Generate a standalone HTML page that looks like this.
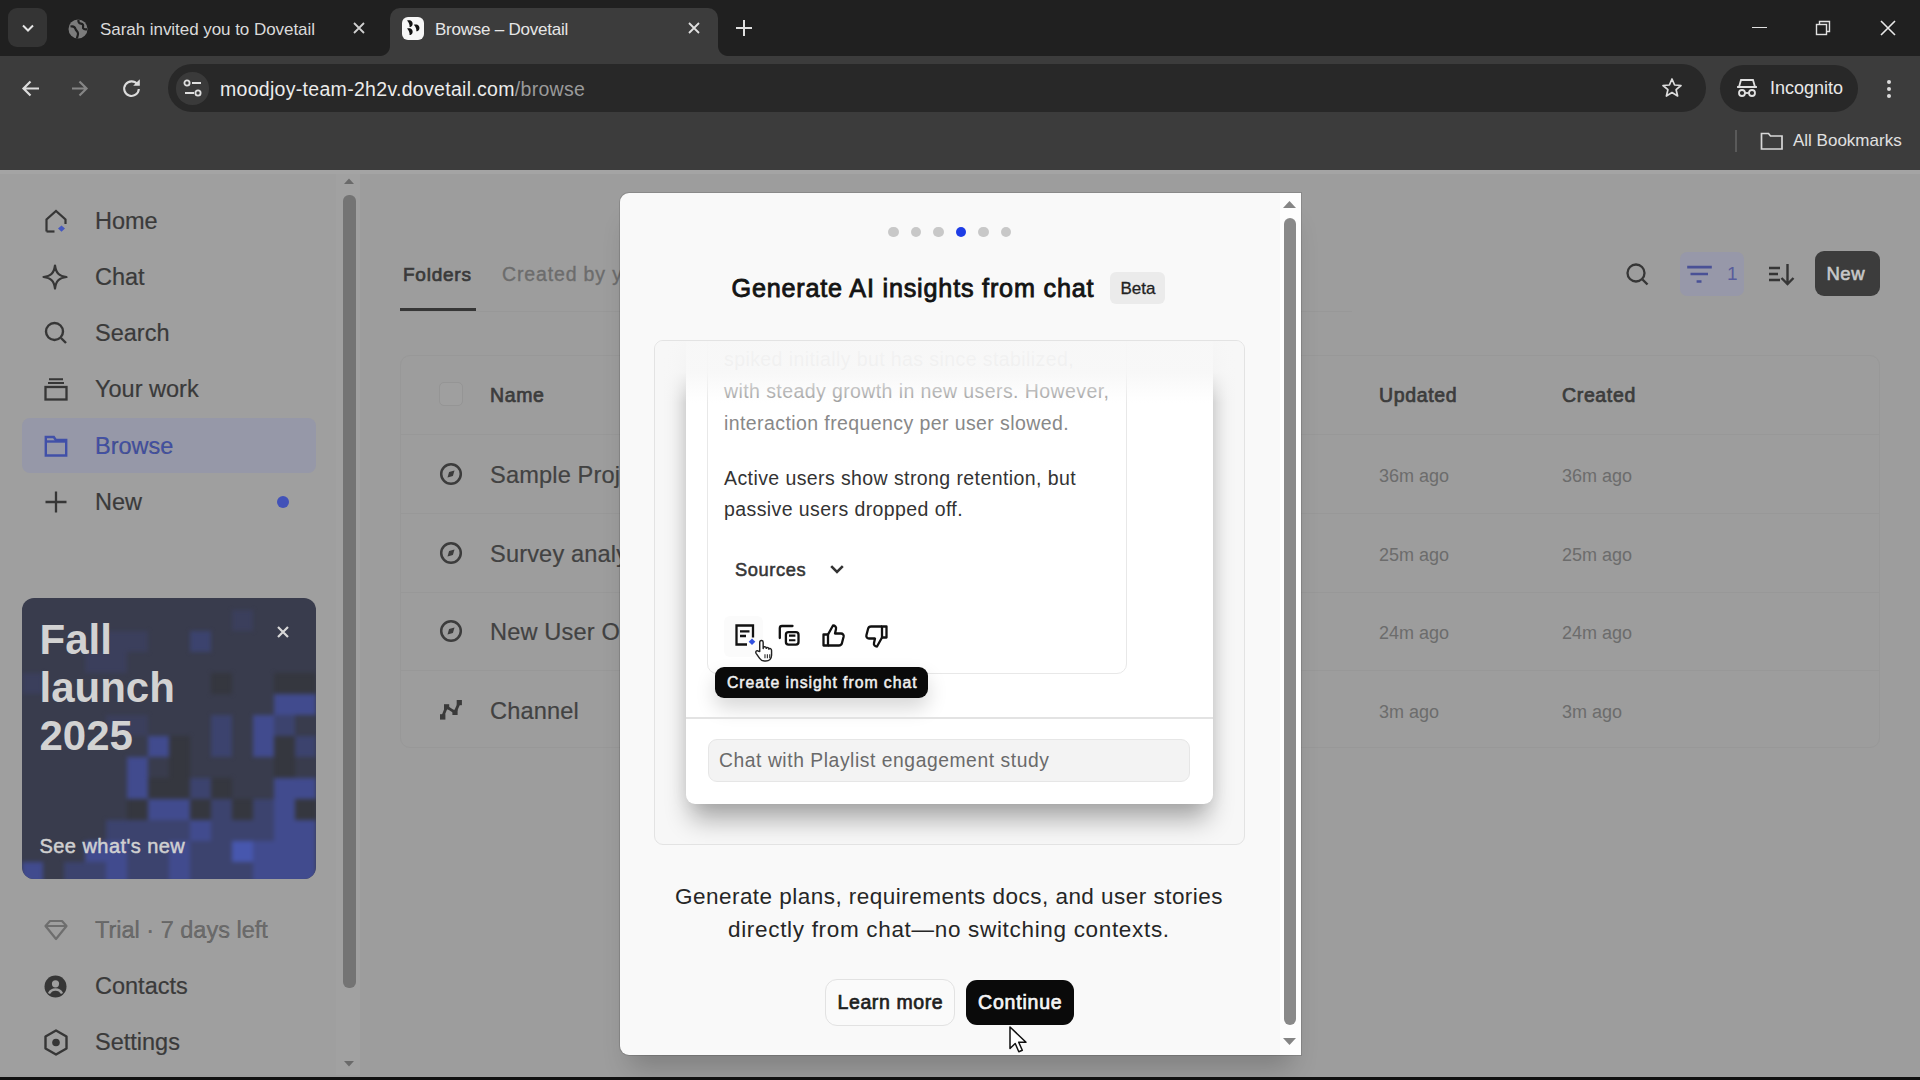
<!DOCTYPE html>
<html><head><meta charset="utf-8">
<style>
*{box-sizing:border-box;margin:0;padding:0}
html,body{width:1920px;height:1080px;overflow:hidden;background:#fff;font-family:"Liberation Sans",sans-serif}
.a{position:absolute}
.t{position:absolute;white-space:nowrap;line-height:1}
svg{position:absolute;overflow:visible}
/* chrome */
#tabbar{left:0;top:0;width:1920px;height:56px;background:#202020}
#toolbar{left:0;top:56px;width:1920px;height:114px;background:#3c3c3c}
/* page */
#page{left:0;top:170px;width:1920px;height:907px;background:#9d9d9d;overflow:hidden}
#overlay{display:none}
#bottom{left:0;top:1077px;width:1920px;height:3px;background:#111}
.nav{font-size:23.5px;color:#3a3a3a;-webkit-text-stroke:0.2px #3a3a3a}
.hd{font-size:19.5px;letter-spacing:0.65px;-webkit-text-stroke:0.7px #3c3c3c;color:#3c3c3c}
.row{font-size:23.6px;letter-spacing:0.15px;color:#424242;-webkit-text-stroke:0.2px #424242}
.tm{font-size:18px;color:#6c6c6c}
.dot{width:10.5px;height:10.5px;border-radius:6px;background:#c8c8c8;margin:0.25px}
.ct{font-size:19.5px;letter-spacing:0.41px;color:#333}
.desc{font-size:22.5px;color:#262626}
</style></head><body>
<div id="tabbar" class="a">
  <div class="a" style="left:8px;top:8px;width:39px;height:39px;border-radius:9px;background:#343434"></div>
  <svg style="left:20px;top:20px" width="16" height="16" viewBox="0 0 16 16"><path d="M3 5.5l5 5 5-5" fill="none" stroke="#e6e6e6" stroke-width="2"/></svg>
  <!-- tab 1 -->
  <svg style="left:68px;top:18.5px" width="20" height="20" viewBox="0 0 20 20"><circle cx="10" cy="10" r="9.5" fill="#7c7c7c"/><path d="M2.5 7.5c2.5-.5 4.5.5 5 2.5s2.5 2 2.5 4.5-1 3-1 5M10.5 0.8c-.5 2 .5 3.5 2.5 3.8s2.5 1.5 2 3.5 2 2.5 4 2" fill="none" stroke="#202020" stroke-width="2.2"/></svg>
  <div class="t" style="left:100px;top:20.9px;font-size:17px;letter-spacing:-0.05px;color:#dadada">Sarah invited you to Dovetail</div>
  <svg style="left:352px;top:21px" width="14" height="14" viewBox="0 0 14 14"><path d="M2 2l10 10M12 2L2 12" stroke="#d0d0d0" stroke-width="1.8"/></svg>
  <!-- active tab -->
  <div class="a" style="left:390px;top:8px;width:328px;height:50px;border-radius:10px 10px 0 0;background:#3c3c3c"></div>
  <div class="a" style="left:380px;top:46px;width:10px;height:10px;background:radial-gradient(circle at 0 0,rgba(60,60,60,0) 9.5px,#3c3c3c 10.5px)"></div>
  <div class="a" style="left:718px;top:46px;width:10px;height:10px;background:radial-gradient(circle at 100% 0,rgba(60,60,60,0) 9.5px,#3c3c3c 10.5px)"></div>
  <div class="a" style="left:402px;top:17px;width:22px;height:22.5px;border-radius:6px;background:#f6f6f6"></div>
  <svg style="left:402px;top:17px" width="22" height="22" viewBox="0 0 22 22"><path transform="translate(5 3.6) scale(0.85)" d="M0 0C4 -1.5 7.5 1 6.5 4.8C6 6.8 4.5 7.5 3 7.5C3.3 5 2.3 2.5 0 0z" fill="#111"/><path transform="translate(5 11.6) scale(0.85)" d="M0 0C4 -1.5 7.5 1 6.5 4.8C6 6.8 4.5 7.5 3 7.5C3.3 5 2.3 2.5 0 0z" fill="#111"/><path transform="translate(11.8 7.8) scale(0.85)" d="M0 0C4 -1.5 7.5 1 6.5 4.8C6 6.8 4.5 7.5 3 7.5C3.3 5 2.3 2.5 0 0z" fill="#111"/></svg>
  <div class="t" style="left:435px;top:20.9px;font-size:17px;letter-spacing:-0.23px;color:#e6e6e6">Browse – Dovetail</div>
  <svg style="left:687px;top:21px" width="14" height="14" viewBox="0 0 14 14"><path d="M2 2l10 10M12 2L2 12" stroke="#e0e0e0" stroke-width="1.8"/></svg>
  <svg style="left:735px;top:19px" width="18" height="18" viewBox="0 0 18 18"><path d="M9 1v16M1 9h16" stroke="#e0e0e0" stroke-width="2"/></svg>
  <!-- window controls -->
  <div class="a" style="left:1752px;top:27px;width:14.5px;height:1.4px;background:#e0e0e0"></div>
  <svg style="left:1815px;top:20px" width="16" height="16" viewBox="0 0 16 16"><rect x="1.5" y="4.5" width="10" height="10" fill="none" stroke="#e0e0e0" stroke-width="1.4"/><path d="M4.5 4.5V1.5h10v10h-3" fill="none" stroke="#e0e0e0" stroke-width="1.4"/></svg>
  <svg style="left:1880px;top:20px" width="16" height="16" viewBox="0 0 16 16"><path d="M1 1l14 14M15 1L1 15" stroke="#e8e8e8" stroke-width="1.6"/></svg>
</div>
<div id="toolbar" class="a">
  <svg style="left:20px;top:22px" width="20" height="20" viewBox="0 0 20 20"><path d="M19 10.5H4M10.5 3.5L3.5 10.5l7 7" fill="none" stroke="#dcdcdc" stroke-width="2.2"/></svg>
  <svg style="left:70px;top:22px" width="20" height="20" viewBox="0 0 20 20"><path d="M2 10.5h15M9.5 3.5l7 7-7 7" fill="none" stroke="#858585" stroke-width="2.2"/></svg>
  <svg style="left:121px;top:22px" width="20" height="20" viewBox="0 0 20 20"><path d="M16.3 6.2A7.3 7.3 0 1 0 17.8 11" fill="none" stroke="#dcdcdc" stroke-width="2.1"/><path d="M12.2 7.8L18.8 1.2V7.8z" fill="#dcdcdc"/></svg>
  <div class="a" style="left:168px;top:8px;width:1538px;height:48px;border-radius:24px;background:#282828"></div>
  <div class="a" style="left:175.5px;top:15.5px;width:33px;height:33px;border-radius:16px;background:#3a3a3a"></div>
  <svg style="left:183px;top:23px" width="20" height="18" viewBox="0 0 20 18"><circle cx="4" cy="4" r="2.6" fill="none" stroke="#e0e0e0" stroke-width="1.8"/><path d="M9 4h9M2 14h9" stroke="#e0e0e0" stroke-width="1.8"/><circle cx="15" cy="14" r="2.6" fill="none" stroke="#e0e0e0" stroke-width="1.8"/></svg>
  <div class="t" style="left:220px;top:24.2px;font-size:19.5px;letter-spacing:0.3px;color:#ececec">moodjoy-team-2h2v.dovetail.com<span style="color:#9a9a9a">/browse</span></div>
  <svg style="left:1661px;top:21px" width="22" height="22" viewBox="0 0 22 22"><path d="M11 2l2.6 6 6.4.5-4.9 4.2 1.5 6.3L11 15.6 5.4 19l1.5-6.3L2 8.5 8.4 8z" fill="none" stroke="#dcdcdc" stroke-width="1.7" stroke-linejoin="round"/></svg>
  <div class="a" style="left:1720px;top:9px;width:138px;height:47px;border-radius:24px;background:#282828"></div>
  <svg style="left:1736px;top:22px" width="22" height="20" viewBox="0 0 22 20"><path d="M5 2h12l2 7H3z" fill="none" stroke="#e0e0e0" stroke-width="1.8"/><path d="M1 9h20" stroke="#e0e0e0" stroke-width="1.8"/><circle cx="6" cy="15" r="3" fill="none" stroke="#e0e0e0" stroke-width="1.8"/><circle cx="16" cy="15" r="3" fill="none" stroke="#e0e0e0" stroke-width="1.8"/><path d="M9 15h4" stroke="#e0e0e0" stroke-width="1.8"/></svg>
  <div class="t" style="left:1770px;top:23px;font-size:18px;color:#e8e8e8">Incognito</div>
  <div class="a" style="left:1887px;top:24px;width:4px;height:4px;border-radius:2px;background:#dcdcdc"></div>
  <div class="a" style="left:1887px;top:31px;width:4px;height:4px;border-radius:2px;background:#dcdcdc"></div>
  <div class="a" style="left:1887px;top:38px;width:4px;height:4px;border-radius:2px;background:#dcdcdc"></div>
  <!-- bookmarks -->
  <div class="a" style="left:1735px;top:74px;width:1.5px;height:22px;background:#5a5a5a"></div>
  <svg style="left:1760px;top:75px" width="24" height="20" viewBox="0 0 24 20"><path d="M1.5 2.5h7l2 2.5h11.5v13H1.5z" fill="none" stroke="#d8d8d8" stroke-width="1.7"/></svg>
  <div class="t" style="left:1793px;top:76px;font-size:17px;color:#e0e0e0">All Bookmarks</div>
</div>
<div id="page" class="a">
  <!-- sidebar -->
  <div class="a" style="left:0;top:0;width:336px;height:905px;background:#9f9f9f"></div>
  <!-- nav -->
  <svg style="left:44px;top:39px" width="24" height="24" viewBox="0 0 24 24"><path d="M2.5 22.5V10.5L12 2l9.5 8.5V15" fill="none" stroke="#363636" stroke-width="2.2" stroke-linejoin="miter"/><path d="M2.5 22.5h8" stroke="#363636" stroke-width="2.2"/><path d="M17.5 16.5l3.5 3-3.5 3.2-3.5-3.2z" fill="#4558c0"/></svg>
  <div class="t nav" style="left:95px;top:40px">Home</div>
  <svg style="left:42px;top:94px" width="26" height="26" viewBox="0 0 26 26"><path d="M13 1.5C14 9 17 12 24.5 13 17 14 14 17 13 24.5 12 17 9 14 1.5 13 9 12 12 9 13 1.5z" fill="none" stroke="#363636" stroke-width="2.2" stroke-linejoin="round"/></svg>
  <div class="t nav" style="left:95px;top:96px">Chat</div>
  <svg style="left:44px;top:151px" width="24" height="24" viewBox="0 0 24 24"><circle cx="10.5" cy="10.5" r="8.5" fill="none" stroke="#363636" stroke-width="2.4"/><path d="M17 17l5 5" stroke="#363636" stroke-width="2.4"/></svg>
  <div class="t nav" style="left:95px;top:152px">Search</div>
  <svg style="left:44px;top:207px" width="24" height="24" viewBox="0 0 24 24"><rect x="1.5" y="10" width="21" height="12.5" fill="none" stroke="#363636" stroke-width="2.3"/><path d="M4 6h16M5 2.2h14" stroke="#363636" stroke-width="2"/></svg>
  <div class="t nav" style="left:95px;top:208px">Your work</div>
  <div class="a" style="left:22px;top:248px;width:294px;height:55px;border-radius:8px;background:#9698a8"></div>
  <svg style="left:44px;top:264px" width="24" height="24" viewBox="0 0 24 24"><path d="M1.8 3h8l2 3h10.4v15.5H1.8z" fill="none" stroke="#4150a8" stroke-width="2.4"/><path d="M1.8 7.5h20.4" stroke="#4150a8" stroke-width="2.4"/></svg>
  <div class="t nav" style="left:95px;top:265px;color:#4150a8">Browse</div>
  <svg style="left:44px;top:320px" width="24" height="24" viewBox="0 0 24 24"><path d="M12 1.5v21M1.5 12h21" stroke="#363636" stroke-width="2.3"/></svg>
  <div class="t nav" style="left:95px;top:321px">New</div>
  <div class="a" style="left:276.5px;top:326px;width:12px;height:12px;border-radius:6px;background:#4252b8"></div>
  <!-- promo -->
  <div class="a" id="promo" style="left:22px;top:428px;width:294px;height:281px;border-radius:12px;overflow:hidden;background:#393c4d"><div class="a" style="left:0;top:0;width:294px;height:294px;filter:blur(2px)"><div class="a" style="left:210px;top:12px;width:21px;height:21px;background:#3b3f5c"></div><div class="a" style="left:84px;top:33px;width:21px;height:21px;background:#3b3f5c"></div><div class="a" style="left:105px;top:33px;width:21px;height:21px;background:#3b3f5c"></div><div class="a" style="left:168px;top:33px;width:21px;height:21px;background:#3c436e"></div><div class="a" style="left:63px;top:54px;width:21px;height:21px;background:#3b3f5c"></div><div class="a" style="left:84px;top:54px;width:21px;height:21px;background:#3b3f5c"></div><div class="a" style="left:0px;top:75px;width:21px;height:21px;background:#3b3f5c"></div><div class="a" style="left:189px;top:75px;width:21px;height:21px;background:#35373f"></div><div class="a" style="left:252px;top:75px;width:21px;height:21px;background:#35373f"></div><div class="a" style="left:273px;top:75px;width:21px;height:21px;background:#35373f"></div><div class="a" style="left:252px;top:96px;width:21px;height:21px;background:#414b8e"></div><div class="a" style="left:273px;top:96px;width:21px;height:21px;background:#414b8e"></div><div class="a" style="left:84px;top:117px;width:21px;height:21px;background:#3b3f5c"></div><div class="a" style="left:105px;top:117px;width:21px;height:21px;background:#3b3f5c"></div><div class="a" style="left:189px;top:117px;width:21px;height:21px;background:#3c436e"></div><div class="a" style="left:231px;top:117px;width:21px;height:21px;background:#414b8e"></div><div class="a" style="left:252px;top:117px;width:21px;height:21px;background:#3c436e"></div><div class="a" style="left:126px;top:138px;width:21px;height:21px;background:#414b8e"></div><div class="a" style="left:147px;top:138px;width:21px;height:21px;background:#35373f"></div><div class="a" style="left:189px;top:138px;width:21px;height:21px;background:#3c436e"></div><div class="a" style="left:231px;top:138px;width:21px;height:21px;background:#414b8e"></div><div class="a" style="left:252px;top:138px;width:21px;height:21px;background:#35373f"></div><div class="a" style="left:273px;top:138px;width:21px;height:21px;background:#3c436e"></div><div class="a" style="left:105px;top:159px;width:21px;height:21px;background:#414b8e"></div><div class="a" style="left:147px;top:159px;width:21px;height:21px;background:#35373f"></div><div class="a" style="left:252px;top:159px;width:21px;height:21px;background:#35373f"></div><div class="a" style="left:105px;top:180px;width:21px;height:21px;background:#414b8e"></div><div class="a" style="left:126px;top:180px;width:21px;height:21px;background:#35373f"></div><div class="a" style="left:147px;top:180px;width:21px;height:21px;background:#35373f"></div><div class="a" style="left:168px;top:180px;width:21px;height:21px;background:#3c436e"></div><div class="a" style="left:189px;top:180px;width:21px;height:21px;background:#35373f"></div><div class="a" style="left:252px;top:180px;width:21px;height:21px;background:#414b8e"></div><div class="a" style="left:273px;top:180px;width:21px;height:21px;background:#414b8e"></div><div class="a" style="left:105px;top:201px;width:21px;height:21px;background:#35373f"></div><div class="a" style="left:126px;top:201px;width:21px;height:21px;background:#414b8e"></div><div class="a" style="left:147px;top:201px;width:21px;height:21px;background:#414b8e"></div><div class="a" style="left:168px;top:201px;width:21px;height:21px;background:#35373f"></div><div class="a" style="left:189px;top:201px;width:21px;height:21px;background:#3c436e"></div><div class="a" style="left:210px;top:201px;width:21px;height:21px;background:#35373f"></div><div class="a" style="left:231px;top:201px;width:21px;height:21px;background:#3c436e"></div><div class="a" style="left:252px;top:201px;width:21px;height:21px;background:#414b8e"></div><div class="a" style="left:273px;top:201px;width:21px;height:21px;background:#35373f"></div><div class="a" style="left:84px;top:222px;width:21px;height:21px;background:#3c436e"></div><div class="a" style="left:105px;top:222px;width:21px;height:21px;background:#3c436e"></div><div class="a" style="left:126px;top:222px;width:21px;height:21px;background:#3c436e"></div><div class="a" style="left:147px;top:222px;width:21px;height:21px;background:#3c436e"></div><div class="a" style="left:168px;top:222px;width:21px;height:21px;background:#414b8e"></div><div class="a" style="left:189px;top:222px;width:21px;height:21px;background:#3c436e"></div><div class="a" style="left:210px;top:222px;width:21px;height:21px;background:#3c436e"></div><div class="a" style="left:231px;top:222px;width:21px;height:21px;background:#3c436e"></div><div class="a" style="left:252px;top:222px;width:21px;height:21px;background:#414b8e"></div><div class="a" style="left:273px;top:222px;width:21px;height:21px;background:#414b8e"></div><div class="a" style="left:63px;top:243px;width:21px;height:21px;background:#414b8e"></div><div class="a" style="left:84px;top:243px;width:21px;height:21px;background:#414b8e"></div><div class="a" style="left:105px;top:243px;width:21px;height:21px;background:#3c436e"></div><div class="a" style="left:126px;top:243px;width:21px;height:21px;background:#3c436e"></div><div class="a" style="left:147px;top:243px;width:21px;height:21px;background:#414b8e"></div><div class="a" style="left:168px;top:243px;width:21px;height:21px;background:#3c436e"></div><div class="a" style="left:189px;top:243px;width:21px;height:21px;background:#3c436e"></div><div class="a" style="left:210px;top:243px;width:21px;height:21px;background:#4757ae"></div><div class="a" style="left:231px;top:243px;width:21px;height:21px;background:#414b8e"></div><div class="a" style="left:252px;top:243px;width:21px;height:21px;background:#414b8e"></div><div class="a" style="left:273px;top:243px;width:21px;height:21px;background:#414b8e"></div><div class="a" style="left:0px;top:264px;width:21px;height:21px;background:#414b8e"></div><div class="a" style="left:42px;top:264px;width:21px;height:21px;background:#3c436e"></div><div class="a" style="left:63px;top:264px;width:21px;height:21px;background:#3c436e"></div><div class="a" style="left:84px;top:264px;width:21px;height:21px;background:#414b8e"></div><div class="a" style="left:105px;top:264px;width:21px;height:21px;background:#3c436e"></div><div class="a" style="left:126px;top:264px;width:21px;height:21px;background:#3c436e"></div><div class="a" style="left:147px;top:264px;width:21px;height:21px;background:#414b8e"></div><div class="a" style="left:168px;top:264px;width:21px;height:21px;background:#3c436e"></div><div class="a" style="left:189px;top:264px;width:21px;height:21px;background:#3c436e"></div><div class="a" style="left:210px;top:264px;width:21px;height:21px;background:#3c436e"></div><div class="a" style="left:231px;top:264px;width:21px;height:21px;background:#414b8e"></div><div class="a" style="left:252px;top:264px;width:21px;height:21px;background:#414b8e"></div><div class="a" style="left:273px;top:264px;width:21px;height:21px;background:#414b8e"></div></div>
  <div class="t" style="left:17.5px;top:17.5px;font-size:42px;font-weight:700;color:#d2d2d2;line-height:48.2px">Fall<br>launch<br>2025</div>
  <svg style="left:255px;top:28px" width="12" height="12" viewBox="0 0 12 12"><path d="M1 1l10 10M11 1L1 11" stroke="#d8d8d8" stroke-width="2.2"/></svg>
  <div class="t" style="left:17.5px;top:237.5px;font-size:20px;font-weight:400;-webkit-text-stroke:0.5px #d0d0d0;letter-spacing:0.45px;color:#d0d0d0">See what's new</div>
</div>
  <svg style="left:44px;top:749px" width="24" height="22" viewBox="0 0 24 22"><path d="M6 2h12l4.5 5L12 20 1.5 7z M1.5 7h21" fill="none" stroke="#6e6e6e" stroke-width="2.2" stroke-linejoin="round"/></svg>
  <div class="t nav" style="left:95px;top:749px;color:#6c6c6c">Trial · 7 days left</div>
  <svg style="left:44px;top:805px" width="23" height="23" viewBox="0 0 23 23"><circle cx="11.5" cy="11.5" r="11" fill="#363636"/><circle cx="11.5" cy="8.8" r="3.6" fill="#9f9f9f"/><path d="M5 18.5c1.5-3 4-4 6.5-4s5 1 6.5 4" fill="none" stroke="#9f9f9f" stroke-width="2.4"/></svg>
  <div class="t nav" style="left:95px;top:805px">Contacts</div>
  <svg style="left:43px;top:859px" width="26" height="27" viewBox="0 0 26 27"><path d="M13 1.5l10.5 6v12L13 25.5 2.5 19.5v-12z" fill="none" stroke="#363636" stroke-width="2.4" stroke-linejoin="round"/><circle cx="13" cy="13.5" r="3.8" fill="#363636"/></svg>
  <div class="t nav" style="left:95px;top:861px">Settings</div>
  <!-- sidebar scrollbar -->
  <div class="a" style="left:336px;top:0;width:24px;height:905px;background:#a1a1a1"></div>
  <div class="a" style="left:343px;top:25px;width:12.5px;height:793px;border-radius:6px;background:#747474"></div>
  <svg style="left:343px;top:7px" width="12" height="8" viewBox="0 0 12 8"><path d="M1 7L6 1.5 11 7z" fill="#6a6a6a"/></svg>
  <svg style="left:343px;top:890px" width="12" height="8" viewBox="0 0 12 8"><path d="M1 1L6 6.5 11 1z" fill="#6a6a6a"/></svg>
  <!-- main -->
  <div class="t" style="left:403px;top:94.7px;font-size:19px;letter-spacing:0.76px;-webkit-text-stroke:0.7px #3a3a3a;color:#3a3a3a">Folders</div>
  <div class="t" style="left:502px;top:94.7px;font-size:19.5px;letter-spacing:0.85px;color:#6c6c6c;-webkit-text-stroke:0.35px #6c6c6c">Created by you</div>
  <div class="a" style="left:400px;top:137.5px;width:76px;height:3.5px;background:#363636"></div>
  <div class="a" style="left:400px;top:140.5px;width:952px;height:1.5px;background:#989898"></div>
  <!-- toolbar right -->
  <svg style="left:1626px;top:93px" width="24" height="23" viewBox="0 0 24 23"><circle cx="10" cy="10" r="8.5" fill="none" stroke="#363636" stroke-width="2.3"/><path d="M16.5 16.5l5 5" stroke="#363636" stroke-width="2.4"/></svg>
  <div class="a" style="left:1680px;top:82.3px;width:64.3px;height:43.4px;border-radius:7px;background:#9798a9"></div>
  <svg style="left:1680px;top:90px" width="40" height="30" viewBox="1680 90 40 30"><path d="M1687.2 97.2h24.6M1690.5 104h17.5M1696.6 111.5h4.9" stroke="#4a5196" stroke-width="2.7"/></svg>
  <div class="t" style="left:1727px;top:94.4px;font-size:19px;color:#585c9c">1</div>
  <svg style="left:1768px;top:93px" width="28" height="23" viewBox="0 0 28 23"><path d="M1 5h11M1 11h9M1 17h11" stroke="#363636" stroke-width="2.6"/><path d="M19.5 1v20M13.5 15l6 6 6-6" fill="none" stroke="#363636" stroke-width="2.4"/></svg>
  <div class="a" style="left:1815px;top:81px;width:65px;height:45px;border-radius:9px;background:#3c3c3c"></div>
  <div class="t" style="left:1826.5px;top:95.3px;font-size:18.5px;font-weight:400;letter-spacing:0.5px;-webkit-text-stroke:0.6px #c8c8c8;color:#c8c8c8">New</div>
  <!-- table -->
  <div class="a" style="left:400px;top:185px;width:1480px;height:393px;border:1.5px solid #989898;border-radius:10px;background:#9d9d9d"></div>
  <div class="a" style="left:401px;top:264px;width:1478px;height:1px;background:#989898"></div>
  <div class="a" style="left:401px;top:343px;width:1478px;height:1px;background:#989898"></div>
  <div class="a" style="left:401px;top:421.5px;width:1478px;height:1px;background:#989898"></div>
  <div class="a" style="left:401px;top:500px;width:1478px;height:1px;background:#989898"></div>
  <div class="a" style="left:439px;top:212px;width:24px;height:24px;border:1.5px solid #959595;border-radius:5px;background:#9f9f9f"></div>
  <div class="t hd" style="left:490px;top:215.8px">Name</div>
  <div class="t hd" style="left:1379px;top:215.8px">Updated</div>
  <div class="t hd" style="left:1562px;top:215.8px">Created</div>
  <svg style="left:440px;top:293px" width="22" height="22" viewBox="0 0 22 22"><circle cx="11" cy="11" r="9.8" fill="none" stroke="#3c3c3c" stroke-width="2.5"/><path d="M14.5 7.5l-1.6 5.4-5.4 1.6 1.6-5.4z" fill="#3c3c3c"/></svg>
  <div class="t row" style="left:490px;top:293.5px">Sample Project</div>
  <div class="t tm" style="left:1379px;top:296.5px">36m ago</div><div class="t tm" style="left:1562px;top:296.5px">36m ago</div>
  <svg style="left:440px;top:372px" width="22" height="22" viewBox="0 0 22 22"><circle cx="11" cy="11" r="9.8" fill="none" stroke="#3c3c3c" stroke-width="2.5"/><path d="M14.5 7.5l-1.6 5.4-5.4 1.6 1.6-5.4z" fill="#3c3c3c"/></svg>
  <div class="t row" style="left:490px;top:372.5px">Survey analysis</div>
  <div class="t tm" style="left:1379px;top:375.5px">25m ago</div><div class="t tm" style="left:1562px;top:375.5px">25m ago</div>
  <svg style="left:440px;top:450px" width="22" height="22" viewBox="0 0 22 22"><circle cx="11" cy="11" r="9.8" fill="none" stroke="#3c3c3c" stroke-width="2.5"/><path d="M14.5 7.5l-1.6 5.4-5.4 1.6 1.6-5.4z" fill="#3c3c3c"/></svg>
  <div class="t row" style="left:490px;top:450.5px">New User Onboarding</div>
  <div class="t tm" style="left:1379px;top:453.5px">24m ago</div><div class="t tm" style="left:1562px;top:453.5px">24m ago</div>
  <svg style="left:438px;top:528px" width="26" height="24" viewBox="438 528 26 24"><path d="M442.6 546.8L446.6 536.8 455 542.4 459.3 532.6" fill="none" stroke="#3a3a3a" stroke-width="2.8" stroke-linejoin="round"/><rect x="440" y="544.2" width="5.4" height="5.4" fill="#3a3a3a"/><rect x="444" y="534.2" width="5.2" height="5.2" fill="#3a3a3a"/><rect x="452.4" y="539.8" width="5.2" height="5.2" fill="#3a3a3a"/><rect x="456.7" y="530" width="5.2" height="5.2" fill="#3a3a3a"/></svg>
  <div class="t row" style="left:490px;top:529.5px">Channel</div>
  <div class="t tm" style="left:1379px;top:532.5px">3m ago</div><div class="t tm" style="left:1562px;top:532.5px">3m ago</div>
  <div class="a" style="left:0;top:0;width:1920px;height:4px;background:#a4a4a4"></div>
</div>
<div id="overlay" class="a"></div>
<div id="modal" class="a" style="left:620px;top:193px;width:681px;height:862px;background:#f9f9f9;border-radius:9px 0 0 9px;overflow:hidden;box-shadow:0 0 0 1px rgba(0,0,0,0.12),0 22px 26px -10px rgba(0,0,0,0.2)">
  <!-- dots -->
  <div class="a dot" style="left:268px;top:33.5px"></div>
  <div class="a dot" style="left:290.5px;top:33.5px"></div>
  <div class="a dot" style="left:313px;top:33.5px"></div>
  <div class="a dot" style="left:335.5px;top:33.5px;background:#1e3de6"></div>
  <div class="a dot" style="left:358px;top:33.5px"></div>
  <div class="a dot" style="left:380.5px;top:33.5px"></div>
  <div class="t" style="left:111.5px;top:82.6px;font-size:25.2px;letter-spacing:0.8px;-webkit-text-stroke:0.85px #141414;color:#141414">Generate AI insights from chat</div>
  <div class="a" style="left:490px;top:79px;width:55px;height:32px;border-radius:6px;background:#ebebeb"></div>
  <div class="t" style="left:500.5px;top:86.6px;font-size:17px;color:#222;-webkit-text-stroke:0.3px #222">Beta</div>
  <!-- frame -->
  <div class="a" style="left:34px;top:147px;width:591px;height:505px;border:1.5px solid #e3e3e3;border-radius:9px;background:#f7f7f7;overflow:hidden">
    <!-- card -->
    <div class="a" style="left:30.5px;top:-20px;width:527px;height:482.5px;background:#fff;border-radius:0 0 9px 9px;box-shadow:0 20px 26px -5px rgba(0,0,0,0.32),0 0 18px rgba(0,0,0,0.07)">
      <!-- bubble -->
      <div class="a" style="left:21.5px;top:-10px;width:419.5px;height:362.5px;border:1.5px solid #e8e8e8;border-radius:0 0 10px 10px"></div>
      <div class="t ct" style="left:38.5px;top:29px;color:#a8a8a8">spiked initially but has since stabilized,</div>
      <div class="t ct" style="left:38.5px;top:61.1px;color:#9c9c9c">with steady growth in new users. However,</div>
      <div class="t ct" style="left:38.5px;top:93px;color:#888">interaction frequency per user slowed.</div>
      <div class="t ct" style="left:38.5px;top:147.8px;color:#333">Active users show strong retention, but</div>
      <div class="t ct" style="left:38.5px;top:178.5px;color:#333">passive users dropped off.</div>
      <div class="t" style="left:49.5px;top:239.7px;font-size:18.3px;letter-spacing:0.6px;-webkit-text-stroke:0.55px #363636;color:#363636">Sources</div>
      <svg style="left:144px;top:244px" width="14" height="9" viewBox="0 0 14 9"><path d="M1.2 1.2l5.8 5.8 5.8-5.8" fill="none" stroke="#333" stroke-width="2.6"/></svg>
      <div class="a" style="left:38px;top:294.5px;width:39px;height:41px;border-radius:6px;background:#fbfbfb"></div>
      <svg style="left:49px;top:303px" width="22" height="22" viewBox="0 0 22 22"><path d="M12 20.5H1.5V1.5h16.5v12" fill="none" stroke="#111" stroke-width="2.3"/><path d="M5 7.3h9.5M5 12h6" stroke="#111" stroke-width="2.3"/><path d="M17 14.5l3.3 3.3-3.3 3.3-3.3-3.3z" fill="#3050e0"/></svg>
      <svg style="left:92.5px;top:303px" width="23" height="23" viewBox="0 0 23 23"><path d="M1.8 14V4.2Q1.8 2 4 2H14.5" fill="none" stroke="#111" stroke-width="2.3" stroke-linecap="round"/><rect x="7.9" y="8.1" width="12.6" height="12.6" rx="2.6" fill="none" stroke="#111" stroke-width="2.3"/><path d="M11 11.6h6.4M11 16.2h6.4" stroke="#111" stroke-width="2.1"/></svg>
      <svg style="left:136px;top:303px" width="23" height="23" viewBox="0 0 23 23"><path d="M1.5 10.5h4.5v11H1.5z" fill="none" stroke="#111" stroke-width="2.3" stroke-linejoin="round"/><path d="M6 10.5l5-9c2 0 3.5 1.3 3 3.5l-1 4.5h6c1.8 0 3 1.5 2.6 3.2l-1.7 6.5c-.4 1.5-1.5 2.3-3 2.3H6" fill="none" stroke="#111" stroke-width="2.3" stroke-linejoin="round"/></svg>
      <svg style="left:179px;top:303.5px" width="23" height="23" viewBox="0 0 23 23"><g transform="rotate(180 11.5 11.5)"><path d="M1.5 10.5h4.5v11H1.5z" fill="none" stroke="#111" stroke-width="2.3" stroke-linejoin="round"/><path d="M6 10.5l5-9c2 0 3.5 1.3 3 3.5l-1 4.5h6c1.8 0 3 1.5 2.6 3.2l-1.7 6.5c-.4 1.5-1.5 2.3-3 2.3H6" fill="none" stroke="#111" stroke-width="2.3" stroke-linejoin="round"/></g></svg>
      <!-- hand cursor -->
      <svg style="left:68.5px;top:317.5px" width="21" height="23" viewBox="0 0 22 24"><path d="M6 13V3.5c0-1.2.8-2 1.8-2s1.8.8 1.8 2V10l.2-1c.3-1 1.5-1.3 2.3-.7.6.4.7 1 .7 1.5.3-.9 1.5-1.2 2.2-.6.5.4.6 1 .6 1.5.4-.8 1.4-1 2-.5.6.4.8 1 .8 1.8v5c0 3.5-2.5 6-6 6h-1.5c-2.2 0-3.7-1-5-2.8L2.2 15c-.6-.9-.4-2 .4-2.5.8-.5 1.7-.3 2.3.4z" fill="#fff" stroke="#222" stroke-width="1.5" stroke-linejoin="round"/><path d="M11.5 16v4M14 16v4M16.5 16v4" stroke="#222" stroke-width="1.1"/></svg>
      <!-- tooltip -->
      <div class="a" style="left:29.5px;top:345.5px;width:213px;height:31.5px;border-radius:9px;background:#0a0a0a;box-shadow:0 10px 20px rgba(0,0,0,0.16)"></div>
      <div class="t" style="left:41.5px;top:353.6px;font-size:15.8px;letter-spacing:0.95px;-webkit-text-stroke:0.5px #f0f0f0;color:#f0f0f0">Create insight from chat</div>
      <div class="a" style="left:0;top:396px;width:527px;height:1.5px;background:#e3e3e3"></div>
      <div class="a" style="left:22px;top:418px;width:482px;height:43px;border:1.5px solid #e6e6e6;border-radius:9px;background:#f3f3f3"></div>
      <div class="t" style="left:33.5px;top:429.5px;font-size:19.3px;letter-spacing:0.56px;color:#6a6a6a">Chat with Playlist engagement study</div>
    </div>
    <div class="a" style="left:0;top:0;width:591px;height:62px;background:linear-gradient(rgba(247,247,247,0.96) 0%,rgba(247,247,247,0.9) 50%,rgba(247,247,247,0) 100%)"></div>
  </div>
  <div class="t desc" style="left:55px;top:692.7px;letter-spacing:0.47px">Generate plans, requirements docs, and user stories</div>
  <div class="t desc" style="left:108px;top:726px;letter-spacing:0.68px">directly from chat—no switching contexts.</div>
  <div class="a" style="left:204.5px;top:786px;width:130.5px;height:47px;border:1.5px solid #e2e2e2;border-radius:12px;background:#fafafa"></div>
  <div class="t" style="left:217.5px;top:799.9px;font-size:19.5px;letter-spacing:0.6px;-webkit-text-stroke:0.7px #1e1e1e;color:#1e1e1e">Learn more</div>
  <div class="a" style="left:345.5px;top:787px;width:108.5px;height:45px;border-radius:11px;background:#0a0a0a"></div>
  <div class="t" style="left:358px;top:799.9px;font-size:19.5px;letter-spacing:0.8px;-webkit-text-stroke:0.7px #f6f6f6;color:#f6f6f6">Continue</div>
  <!-- modal scrollbar -->
  <div class="a" style="left:660px;top:0;width:21px;height:862px;background:#fdfdfd"></div>
  <svg style="left:663px;top:8px" width="13" height="7" viewBox="0 0 13 7"><path d="M0 7L6.5 0 13 7z" fill="#858585"/></svg>
  <div class="a" style="left:663.5px;top:25px;width:12.5px;height:807px;border-radius:6px;background:#898989"></div>
  <svg style="left:663px;top:845px" width="13" height="7" viewBox="0 0 13 7"><path d="M0 0l6.5 7L13 0z" fill="#858585"/></svg>
</div>
<svg style="left:1009px;top:1026px" width="19" height="28" viewBox="0 0 19 28"><path d="M1 1v21.5l5.2-5 3.6 8.3 3.5-1.5-3.6-8.1h7.3z" fill="#fff" stroke="#111" stroke-width="1.5" stroke-linejoin="round"/></svg>
<div id="bottom" class="a"></div>
</body></html>
